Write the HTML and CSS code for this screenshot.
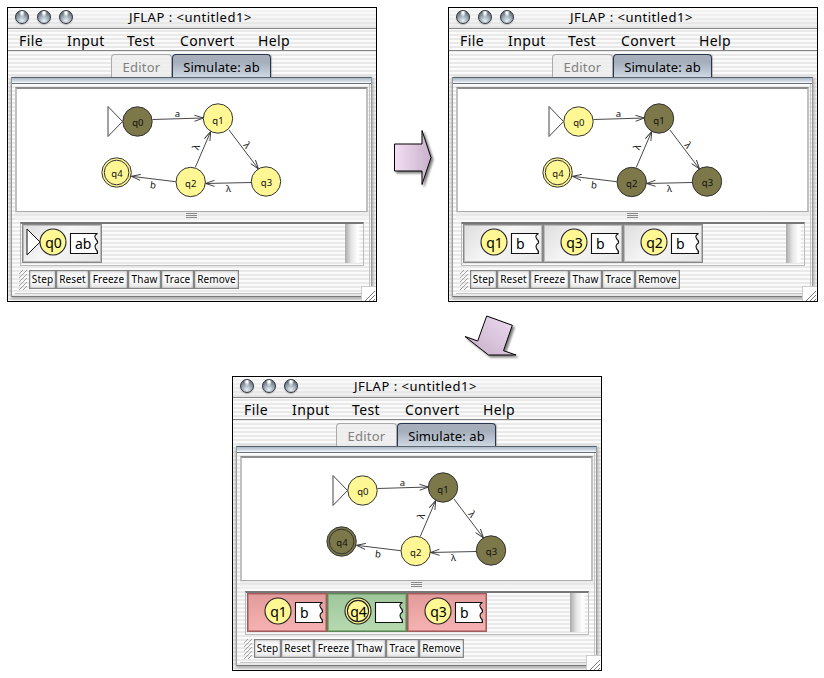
FILE: index.html
```html
<!DOCTYPE html>
<html lang="en">
<head>
<meta charset="utf-8">
<title>JFLAP simulation</title>
<link rel="stylesheet" href="styles.css">
</head>
<body>
<main class="canvas" id="canvas">
  <svg class="arrows" width="824" height="678">
    <defs>
      <linearGradient id="lilac"><stop offset="0" stop-color="#f3def5"/><stop offset="1" stop-color="#c8b2cb"/></linearGradient>
      <linearGradient id="lilac2" x1="1" y1="0" x2="0" y2="1"><stop offset="0" stop-color="#efdcf1"/><stop offset="1" stop-color="#c4aec7"/></linearGradient>
      <filter id="shadow" x="-30%" y="-30%" width="170%" height="170%"><feDropShadow dx="2" dy="2" stdDeviation="1.3" flood-opacity=".5"/></filter>
      <marker id="head" viewBox="-10 -4 11 8" refX="0" refY="0" markerWidth="11" markerHeight="8" markerUnits="userSpaceOnUse" orient="auto"><path d="M-9-3L0 0L-9 3" fill="none" stroke="#333" stroke-width=".9"/></marker>
      <g id="graph">
        <g class="edges">
          <path d="M152.500 119.500L203.500 118"/>
          <path d="M229 130L258.500 169"/>
          <path d="M251 182.500L205.500 183.500"/>
          <path d="M195.300 167.300L210.700 131.500"/>
          <path d="M175.700 181.700L131.500 176.300"/>
        </g>
        <path class="start" d="M108 106.500V136.500L122.500 121.500Z"/>
        <g class="nodes">
          <circle class="n0" cx="137.500" cy="121.500" r="14.700"/>
          <circle class="n1" cx="218" cy="118.500" r="14.700"/>
          <circle class="n2" cx="190.700" cy="182" r="14.700"/>
          <circle class="n3" cx="266" cy="181.500" r="14.700"/>
          <circle class="n4" cx="116.600" cy="172.500" r="14.700"/>
          <circle class="n4" cx="116.600" cy="172.500" r="12.300"/>
        </g>
        <g class="names">
          <text x="137.800" y="125.500">q0</text><text x="218" y="123.500">q1</text>
          <text x="190.700" y="187">q2</text><text x="266.500" y="186">q3</text><text x="117" y="176.500">q4</text>
          <text x="177.500" y="116.500">a</text>
          <text transform="translate(247 145.500) rotate(53)" y="3">λ</text>
          <text transform="translate(196.500 147) rotate(-67)" y="3">λ</text>
          <text x="228.500" y="191.500">λ</text>
          <text transform="translate(153 185) rotate(7)" y="3.500">b</text>
        </g>
      </g>
      <g id="tape"><path d="M48.500 9.500H75.500Q71.500 11.500 73.500 14.500Q76 17 75.500 19Q72 21 73.500 24.500Q76 27 75.500 29.500H48.500Z"/></g>
    </defs>
    <g fill="url(#lilac)" stroke="#000" filter="url(#shadow)">
      <path d="M394.500 144H422V130.500L431 157.500L422 184.500V171H394.500Z"/>
      <path fill="url(#lilac2)" d="M486.700 316L512.300 325.300L503.500 350.700L516 355H488.500L465 336.500L477.700 341Z"/>
    </g>
  </svg>
</main>
<script src="windows.js"></script>
</body>
</html>
```
FILE: windows.js
```js
const steps = [
  { cls: "first", cells: [["q0", "ab", "initial"]] },
  { cls: "second", cells: [["q1", "b", ""], ["q3", "b", ""], ["q2", "b", ""]] },
  { cls: "third", cells: [["q1", "b", "reject"], ["q4", "", "accept"], ["q3", "b", "reject"]] },
];

const cell = ([state, input, kind]) => `
  <svg class="cell ${kind}" width="80" height="39" viewBox="1 1 78 37">
    ${kind === "initial" ? '<path d="M5 5V31L18 18Z"/>' : ""}
    <circle cx="31" cy="18" r="13"/>
    ${kind === "accept" ? '<circle cx="31" cy="18" r="10.600"/>' : ""}
    <text x="31.500" y="24" text-anchor="middle">${state}</text>
    <use href="#tape"/>
    <text x="53" y="25">${input}</text>
  </svg>`;

const win = ({ cls, cells }) => `
  <section class="window ${cls}">
    <header class="title"><i></i><i></i><i></i><span>JFLAP : &lt;untitled1&gt;</span></header>
    <nav class="menu"><span>File</span><span>Input</span><span>Test</span><span>Convert</span><span>Help</span></nav>
    <div class="tabs"><span class="tab off">Editor</span><span class="tab on">Simulate: ab</span></div>
    <div class="frame">
      <div class="band"></div>
      <div class="inner">
        <svg class="view" width="353" height="125" viewBox="17 89 349 122"><use href="#graph"/></svg>
        <div class="divider"><b></b></div>
        <div class="configs"><div class="cells">${cells.map(cell).join("")}</div><div class="scroll"></div></div>
        <div class="toolbar">
          <svg class="grip" width="9" height="20"><path d="M0 4L4 0M0 8L8 0M0 12L8 4M0 16L8 8M0 20L8 12M4 20L8 16"/></svg>
          <button>Step</button><button>Reset</button><button>Freeze</button><button>Thaw</button><button>Trace</button><button>Remove</button>
        </div>
      </div>
    </div>
    <svg class="resize" width="15" height="15"><path d="M3 14L13 4M7 14L13 8M11 14L13 12"/></svg>
  </section>`;

document.getElementById("canvas").insertAdjacentHTML("beforeend", steps.map(win).join(""));
```
FILE: styles.css
```css
* { box-sizing: border-box; }
body { margin: 0; background: #fff; font-family: "Noto Sans", "Open Sans", sans-serif; color: #000; }
.canvas { position: relative; width: 824px; height: 678px; overflow: hidden; }
.arrows { position: absolute; inset: 0; }
.window {
  --q0: #fff794; --q1: #fff794; --q2: #fff794; --q3: #fff794; --q4: #fff794;
  position: absolute; width: 370px; height: 295px; border: 1px solid #000;
  background: repeating-linear-gradient(#fbfbfb 0 2px, #e9e9e9 2px 4px);
}
.first { left: 7px; top: 7px; --q0: #7c7849; }
.second { left: 448px; top: 7px; --q1: #7c7849; --q2: #7c7849; --q3: #7c7849; }
.third { left: 232px; top: 376px; --q1: #7c7849; --q3: #7c7849; --q4: #7c7849; }
.title {
  display: flex; align-items: center; gap: 8px; height: 21px; padding-left: 7px;
  border-bottom: 1px solid #858585; font-size: 13px; white-space: nowrap;
  background: linear-gradient(#fff8, #d8d8d866);
}
.title i {
  width: 14px; height: 14px; margin-top: -2px; border-radius: 50%; border: 1px solid #30343c;
  background: radial-gradient(ellipse at 50% 10%, #fff 0 10%, transparent 35%), radial-gradient(circle at 50% 80%, #e8f2f8, #9aa6b2 45%, #3f4856);
  box-shadow: 0 1px 1px #8888;
}
.title span { margin: -2px 0 0 48px; letter-spacing: .5px; line-height: 18px; }
.menu {
  display: grid; grid-template-columns: 48px 60px 53px 78px 60px; height: 22px; padding-left: 11px;
  border-bottom: 1px solid #858585; font-size: 14px; line-height: 23px; letter-spacing: .4px;
}
.tabs { display: flex; height: 26px; padding: 3px 0 0 103px; }
.tab { height: 23px; border: 1px solid #aaa; border-bottom: 0; border-radius: 4px 4px 0 0; font-size: 13px; line-height: 25px; text-align: center; }
.off { width: 61px; color: #808080; background: #eeec; letter-spacing: .25px; }
.on { width: 99px; border-color: #26364f; background: linear-gradient(#a8aeba, #a5aebb 35%, #ced8e2); letter-spacing: .1px; box-shadow: 1px 0 1px #8888; }
.frame { width: 361px; height: 220px; margin-left: 3px; border: 1px solid #999; border-top-color: #59636f; border-bottom-color: #777; box-shadow: 0 2px 3px #8888, 2px 0 3px #8886, -2px 1px 3px #8883; }
.band { height: 6px; border-bottom: 1px solid #68717b; background: linear-gradient(#a9b7c5, #d9e0e8 70%, #fff); }
.inner { display: flex; flex-direction: column; width: 355px; height: 210px; margin-left: 3px; padding-top: 3px; border: 1px solid #c4c4c4; border-top: 0; border-left: 0; }
.view { display: block; background: #fff; border: 2px solid #c0c0c0; border-top-color: #8c8c8c; border-bottom: 1px solid #aaa; }
.divider { height: 10px; background: linear-gradient(#ddd8, #fff8); }
.divider b { display: block; width: 11px; height: 5px; margin: 1px auto 0; position: relative; left: -1px; background: repeating-linear-gradient(#888 0 1px, #eee 1px 2px); }
.configs { display: flex; justify-content: space-between; width: 344px; height: 44px; margin-left: 5px; padding: 0 3px 0 1px; border: 1px solid #bbb; border-top: 2px solid #777; }
.cells { display: flex; }
.cell { border: 1px solid #888; outline: 1px solid #bbb; outline-offset: -2px; background: linear-gradient(135deg, #ddd, #f6f6f6 45%, #e6e6e6); font-size: 14px; }
.cell circle { fill: #fff794; stroke: #222; stroke-width: 1.1; }
.cell path { fill: #fff; stroke: #111; }
.reject { background: linear-gradient(#e29b9b, #f6b2b2); border-color: #a25b5b; outline-color: #c97f7f; }
.accept { background: linear-gradient(#9fc69b, #b7dab1); border-color: #5d8657; outline-color: #82ad7b; }
#tape path { fill: #fff; stroke: #111; stroke-width: 1.1; }
.scroll { width: 16px; height: 39px; margin-right: -1px; background: linear-gradient(90deg, #aaa, #e5e5e5 40%, #fff 80%, #fff0); }
.toolbar { display: flex; height: 19px; margin: 4px 0 0 4px; }
.grip { display: block; margin-right: 1px; fill: none; stroke: #999; stroke-width: .9; }
button { height: 19px; padding: 0; border: 1px solid #858585; box-shadow: inset 0 0 2px #888; background: linear-gradient(#eee, #fff 50%, #e6e6e6); font: 10px/15px "Noto Sans", sans-serif; letter-spacing: .15px; color: #000; }
button:nth-of-type(1) { width: 27px; }
button:nth-of-type(2), button:nth-of-type(4), button:nth-of-type(5) { width: 33px; }
button:nth-of-type(3) { width: 39px; }
button:nth-of-type(6) { width: 45px; }
.resize { position: absolute; right: 0; bottom: 0; background: #fff; border: 1px solid #ccc; border-right: 0; border-bottom: 0; fill: none; stroke: #777; }
.edges path { fill: none; stroke: #333; stroke-width: .9; marker-end: url(#head); }
.start { fill: #fff; stroke: #444; }
.nodes circle { stroke: #333; stroke-width: 1; }
.n0 { fill: var(--q0); } .n1 { fill: var(--q1); } .n2 { fill: var(--q2); } .n3 { fill: var(--q3); } .n4 { fill: var(--q4); }
.names { font-size: 9.500px; text-anchor: middle; fill: #111; }
```
